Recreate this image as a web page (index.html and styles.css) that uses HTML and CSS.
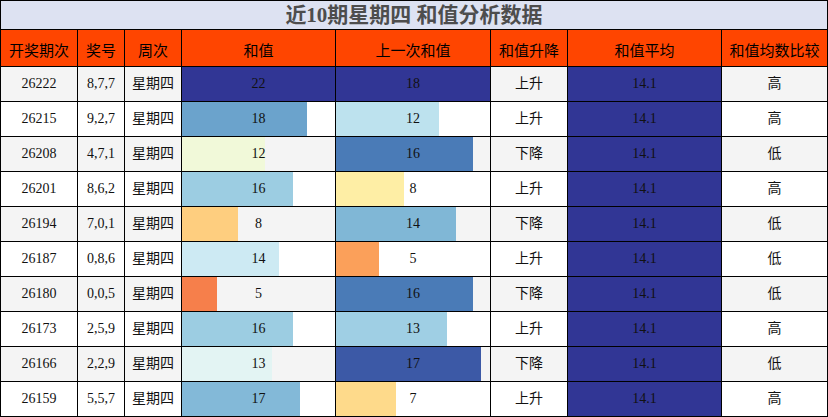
FILE: index.html
```html
<!DOCTYPE html>
<html lang="zh">
<head>
<meta charset="utf-8">
<title>近10期星期四 和值分析数据</title>
<link rel="stylesheet" href="styles.css">
</head>
<body>
<div class="table">
  <div class="title">近10期星期四 和值分析数据</div>

  <div class="row head">
    <div class="cell">开奖期次</div>
    <div class="cell">奖号</div>
    <div class="cell">周次</div>
    <div class="cell">和值</div>
    <div class="cell">上一次和值</div>
    <div class="cell">和值升降</div>
    <div class="cell">和值平均</div>
    <div class="cell">和值均数比较</div>
  </div>

  <div class="row odd">
    <div class="cell">26222</div><div class="cell">8,7,7</div><div class="cell">星期四</div>
    <div class="cell bar" style="--w:100%;--c:#313695">22</div>
    <div class="cell bar" style="--w:100%;--c:#313695">18</div>
    <div class="cell">上升</div><div class="cell avg">14.1</div><div class="cell">高</div>
  </div>
  <div class="row">
    <div class="cell">26215</div><div class="cell">9,2,7</div><div class="cell">星期四</div>
    <div class="cell bar" style="--w:81.82%;--c:#6ba3cc">18</div>
    <div class="cell bar" style="--w:66.67%;--c:#bde2ee">12</div>
    <div class="cell">上升</div><div class="cell avg">14.1</div><div class="cell">高</div>
  </div>
  <div class="row odd">
    <div class="cell">26208</div><div class="cell">4,7,1</div><div class="cell">星期四</div>
    <div class="cell bar" style="--w:54.55%;--c:#f1f9d9">12</div>
    <div class="cell bar" style="--w:88.89%;--c:#4a7bb7">16</div>
    <div class="cell">下降</div><div class="cell avg">14.1</div><div class="cell">低</div>
  </div>
  <div class="row">
    <div class="cell">26201</div><div class="cell">8,6,2</div><div class="cell">星期四</div>
    <div class="cell bar" style="--w:72.73%;--c:#9ccde2">16</div>
    <div class="cell bar" style="--w:44.44%;--c:#feeea5">8</div>
    <div class="cell">上升</div><div class="cell avg">14.1</div><div class="cell">高</div>
  </div>
  <div class="row odd">
    <div class="cell">26194</div><div class="cell">7,0,1</div><div class="cell">星期四</div>
    <div class="cell bar" style="--w:36.36%;--c:#fece7f">8</div>
    <div class="cell bar" style="--w:77.78%;--c:#80b7d6">14</div>
    <div class="cell">下降</div><div class="cell avg">14.1</div><div class="cell">低</div>
  </div>
  <div class="row">
    <div class="cell">26187</div><div class="cell">0,8,6</div><div class="cell">星期四</div>
    <div class="cell bar" style="--w:63.64%;--c:#cdeaf3">14</div>
    <div class="cell bar" style="--w:27.78%;--c:#fba05a">5</div>
    <div class="cell">上升</div><div class="cell avg">14.1</div><div class="cell">低</div>
  </div>
  <div class="row odd">
    <div class="cell">26180</div><div class="cell">0,0,5</div><div class="cell">星期四</div>
    <div class="cell bar" style="--w:22.73%;--c:#f67f4b">5</div>
    <div class="cell bar" style="--w:88.89%;--c:#4a7bb7">16</div>
    <div class="cell">下降</div><div class="cell avg">14.1</div><div class="cell">低</div>
  </div>
  <div class="row">
    <div class="cell">26173</div><div class="cell">2,5,9</div><div class="cell">星期四</div>
    <div class="cell bar" style="--w:72.73%;--c:#9ccde2">16</div>
    <div class="cell bar" style="--w:72.22%;--c:#9fcfe4">13</div>
    <div class="cell">上升</div><div class="cell avg">14.1</div><div class="cell">高</div>
  </div>
  <div class="row odd">
    <div class="cell">26166</div><div class="cell">2,2,9</div><div class="cell">星期四</div>
    <div class="cell bar" style="--w:59.09%;--c:#e3f4f3">13</div>
    <div class="cell bar" style="--w:94.44%;--c:#3c59a6">17</div>
    <div class="cell">下降</div><div class="cell avg">14.1</div><div class="cell">低</div>
  </div>
  <div class="row">
    <div class="cell">26159</div><div class="cell">5,5,7</div><div class="cell">星期四</div>
    <div class="cell bar" style="--w:77.27%;--c:#83b9d8">17</div>
    <div class="cell bar" style="--w:38.89%;--c:#feda8b">7</div>
    <div class="cell">上升</div><div class="cell avg">14.1</div><div class="cell">高</div>
  </div>
</div>
</body>
</html>
```

FILE: styles.css
```css
html, body {
  margin: 0;
  padding: 0;
  background: #ffffff;
}

.table {
  width: 828px;
  box-sizing: border-box;
  display: grid;
  grid-template-columns: 76px 46px 56px 153px 154px 76px 153px 105px;
  grid-template-rows: 28px 36px repeat(10, 34px);
  gap: 1px;
  padding: 1px;
  background: #000000;
  font-family: "Liberation Serif", "Noto Sans CJK SC", serif;
  font-size: 14px;
  color: #111111;
}

.title {
  grid-column: 1 / -1;
  background: #dde2f2;
  color: #4d4d4d;
  font-weight: bold;
  font-size: 21px;
  display: flex;
  align-items: center;
  justify-content: center;
  line-height: 1;
}

.row {
  display: contents;
}

.cell {
  background: #ffffff;
  display: flex;
  align-items: center;
  justify-content: center;
  white-space: nowrap;
  line-height: 1;
}

.row.odd .cell {
  background-color: #f4f4f4;
}

.row.head .cell {
  background: #ff4500;
  color: #000000;
  font-family: "Noto Sans CJK SC", sans-serif;
  font-size: 15px;
  padding-top: 2px;
}

.cell.bar {
  background-image: linear-gradient(to right, var(--c) 0, var(--c) var(--w), transparent var(--w));
}

.row .cell.avg,
.row.odd .cell.avg {
  background: #313695;
}
```
